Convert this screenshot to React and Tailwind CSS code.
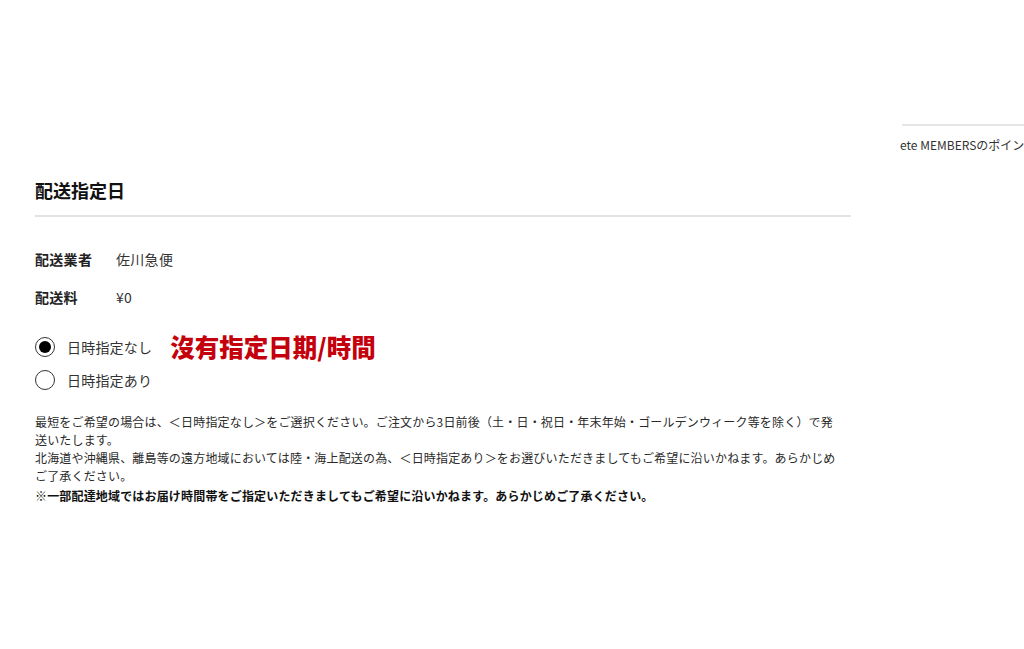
const JP = { fontFamily: '"Noto Sans CJK JP", "Noto Sans", sans-serif' };

function Radio({ checked, label }) {
  return (
    <label className="flex items-center h-[20px]">
      <span className="w-[20px] h-[20px] rounded-full border-[1.5px] border-[#333] flex items-center justify-center shrink-0">
        {checked && <span className="w-[12px] h-[12px] rounded-full bg-black" />}
      </span>
      <span className="ml-[12px] text-[14px] leading-[20px] text-[#333] tracking-[0.2px]">{label}</span>
    </label>
  );
}

export default function App() {
  return (
    <div
      className="w-[1024px] h-[649px] bg-white overflow-hidden flex text-[#222]"
      style={JP}
    >
      {/* ── main column ── */}
      <main className="ml-[35px] w-[816px] shrink-0 pt-[177px]">
        <h2 className="text-[18px] leading-[26px] font-bold text-[#111]">配送指定日</h2>
        <div className="mt-[12px] h-[2px] bg-[#e2e2e2]" />

        <div className="mt-[32px] flex items-center h-[20px] text-[14px] tracking-[0.3px]">
          <span className="w-[81px] font-bold text-[#222]">配送業者</span>
          <span className="text-[#333]">佐川急便</span>
        </div>
        <div className="mt-[18px] flex items-center h-[20px] text-[14px] tracking-[0.3px]">
          <span className="w-[81px] font-bold text-[#222]">配送料</span>
          <span className="text-[#333]">¥0</span>
        </div>

        <div className="mt-[26px] flex items-center h-[28px]">
          <Radio checked label="日時指定なし" />
          <span
            className="ml-[18px] text-[24.5px] leading-[28px] font-black text-[#c4000c]"
            style={{ fontFamily: '"Noto Sans CJK TC", "Noto Sans", sans-serif' }}
          >
            沒有指定日期/時間
          </span>
        </div>
        <div className="mt-[9px]">
          <Radio label="日時指定あり" />
        </div>

        <div className="mt-[23px] w-[806px] text-[12px] leading-[18px] tracking-[0.17px] text-[#2a2a2a]">
          <p>
            最短をご希望の場合は、＜日時指定なし＞をご選択ください。ご注文から3日前後（土・日・祝日・年末年始・ゴールデンウィーク等を除く）で発送いたします。
          </p>
          <p>
            北海道や沖縄県、離島等の遠方地域においては陸・海上配送の為、＜日時指定あり＞をお選びいただきましてもご希望に沿いかねます。あらかじめご了承ください。
          </p>
          <p className="font-bold mt-[2px] text-[#111]">
            ※一部配達地域ではお届け時間帯をご指定いただきましてもご希望に沿いかねます。あらかじめご了承ください。
          </p>
        </div>
      </main>

      {/* ── sidebar (partly off-screen) ── */}
      <aside className="ml-[49px] flex-1 min-w-0 overflow-hidden pt-[124px]">
        <div className="h-[2px] bg-[#e6e6e6] ml-[2px]" />
        <p className="mt-[11px] text-[12px] leading-[16px] whitespace-nowrap text-[#333]">
          ete MEMBERSのポイン
        </p>
      </aside>
    </div>
  );
}
